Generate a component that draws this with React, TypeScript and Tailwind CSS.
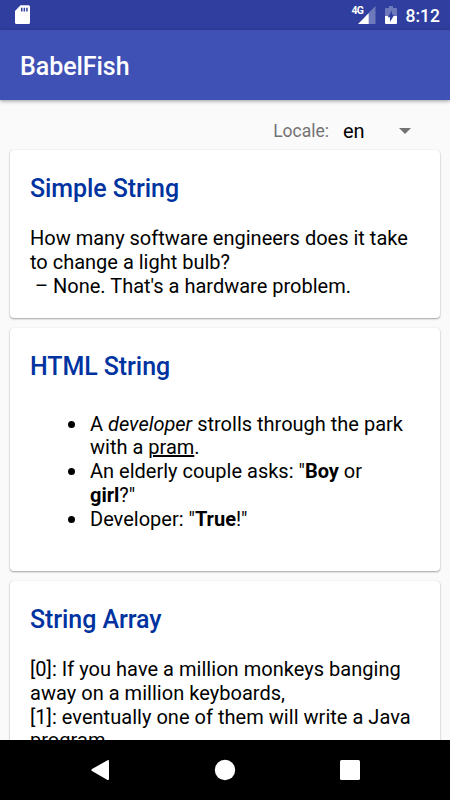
import React from 'react';

interface CardProps {
    title: string;
    className: string;
    children: React.ReactNode;
}

const StatusBar: React.FC = () => (
    <div className="h-[30px] shrink-0 flex items-start bg-[#303f9f] text-white pl-[15px] pr-[10px]">
        <svg className="mt-[5px] w-4 h-5" viewBox="0 0 16 20">
            <path d="M5.5 0.3h8a1.5 1.5 0 0 1 1.5 1.5v15.7a1.5 1.5 0 0 1-1.5 1.5h-12a1.5 1.5 0 0 1-1.5-1.5V6z" fill="#fff" />
            <path d="M6 2.8h1.5v3.7H6zM8.6 2.8h1.5v3.7H8.6zM11.2 2.8h1.5v3.7h-1.5z" fill="#303f9f" />
        </svg>
        <div className="ml-auto flex items-start">
            <span className="mt-[5px] w-[6px] shrink-0 text-[10.5px] leading-[11px] font-bold tracking-[-0.9px] whitespace-nowrap">4G</span>
            <svg className="mt-[6px] w-[18px] h-[18px]" viewBox="0 0 18 18">
                <path d="M17.5 0v18H7V10.5z" fill="#fff" fillOpacity="0.3" />
                <path d="M10.7 7.3V18H0z" fill="#fff" />
            </svg>
            <svg className="mt-[6px] ml-[9px] w-3 h-[18px]" viewBox="0 0 12 18">
                <path d="M4 0h4v2h3a1 1 0 0 1 1 1v7H0V3a1 1 0 0 1 1-1h3z" fill="#fff" fillOpacity="0.3" />
                <path d="M0 10h12v7a1 1 0 0 1-1 1H1a1 1 0 0 1-1-1z" fill="#fff" />
                <path d="M7 4.5v4.3h2.3L5 16v-4.8H2.7z" fill="#303f9f" />
            </svg>
            <span className="mt-[7px] ml-[9px] text-[17.5px] leading-[18px] font-medium">8:12</span>
        </div>
    </div>
);

const Card: React.FC<CardProps> = ({ title, className, children }) => (
    <section className={`shrink-0 bg-white rounded-[4px] px-5 pt-6 shadow-[0_1px_2px_rgba(0,0,0,0.35),0_0_1px_rgba(0,0,0,0.12)] ${className}`}>
        <h2 className="text-[25px] leading-[30px] font-medium tracking-[-0.08px] text-[#0033a0]">{title}</h2>
        {children}
    </section>
);

const Bullet: React.FC<{ children: React.ReactNode }> = ({ children }) => (
    <li className="flex">
        <span className="shrink-0 w-[7px] h-[7px] mt-[8px] mr-[15px] rounded-full bg-black" />
        <p>{children}</p>
    </li>
);

const NavBar: React.FC = () => (
    <nav className="h-[60px] shrink-0 bg-black">
        <svg className="w-[450px] h-[60px]" viewBox="0 0 450 60" fill="#fff">
            <path d="M107.5 20.3 92 29a1.2 1.2 0 0 0 0 2.1l15.5 8.8q1.5.6 1.5-1V21.2q0-1.6-1.5-.9z" />
            <circle cx="225" cy="30" r="10.2" />
            <rect x="340" y="20" width="20" height="20" rx="1.5" />
        </svg>
    </nav>
);

const App: React.FC = () => {
    return (
        <div className="w-[450px] h-[800px] flex flex-col overflow-hidden bg-[#fafafa] text-black font-['Roboto',sans-serif]">
            <StatusBar />
            <header className="h-[70px] shrink-0 flex items-center bg-[#3f51b5] px-5 pt-[4px] shadow-[0_1px_4px_rgba(0,0,0,0.4)]">
                <h1 className="text-[25px] leading-[30px] font-medium tracking-[-0.05px] text-white">BabelFish</h1>
            </header>

            <main className="flex-1 min-h-0 flex flex-col overflow-hidden px-[10px]">
                {/* Locale picker */}
                <div className="h-[50px] shrink-0 flex items-center justify-end pt-[12px] pr-[29px]">
                    <span className="text-[17.5px] text-[#737373]">Locale:</span>
                    <span className="ml-[14px] w-[56px] text-[20px]">en</span>
                    <svg className="w-3 h-[6px]" viewBox="0 0 12 6">
                        <path d="M0 0h12L6 6z" fill="#737373" />
                    </svg>
                </div>

                <Card title="Simple String" className="h-[168px]">
                    <p className="mt-[23px] text-[20px] leading-[23.75px]">
                        How many software engineers does it take to change a light bulb?<br />
                        &nbsp;– None. That's a hardware problem.
                    </p>
                </Card>

                <Card title="HTML String" className="mt-[10px] h-[243px]">
                    <ul className="mt-[30.7px] pl-[38px] text-[20px] leading-[23.75px]">
                        <Bullet>A <em>developer</em> strolls through the park with a <u>pram</u>.</Bullet>
                        <Bullet>An elderly couple asks: "<b>Boy</b> or<br /><b>girl</b>?"</Bullet>
                        <Bullet>Developer: "<b>True</b>!"</Bullet>
                    </ul>
                </Card>

                <Card title="String Array" className="mt-[10px] h-[240px]">
                    <p className="mt-[23px] text-[20px] leading-[23.75px] tracking-[0.03px]">
                        [0]: If you have a million monkeys banging away on a million keyboards,<br />
                        [1]: eventually one of them will write a Java program.
                    </p>
                </Card>
            </main>

            <NavBar />
        </div>
    );
};

export default App;
